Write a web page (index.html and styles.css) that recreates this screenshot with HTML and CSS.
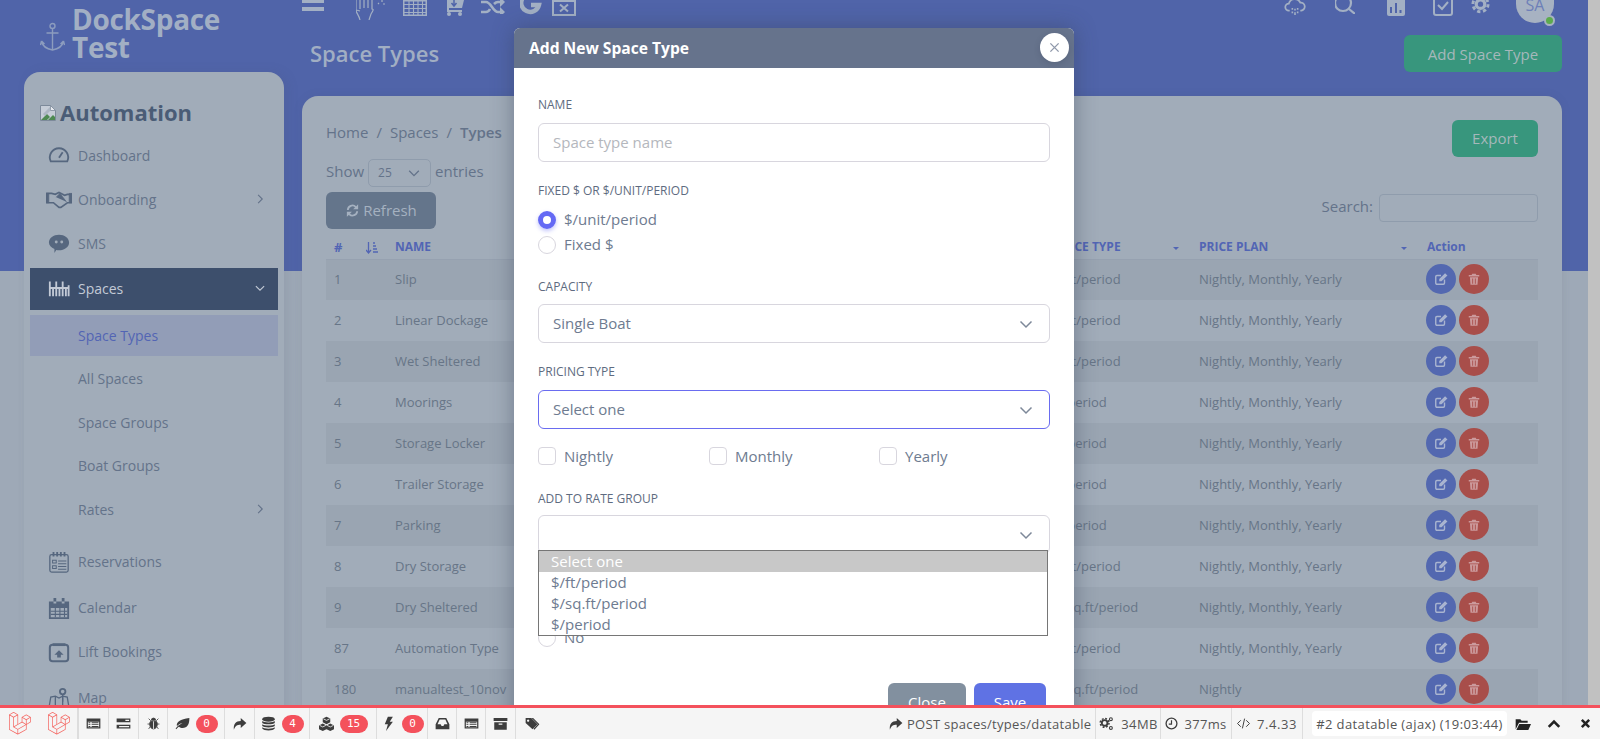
FILE: index.html
```html
<!DOCTYPE html>
<html lang="en">
<head>
<meta charset="utf-8">
<title>Space Types</title>
<link rel="stylesheet" href="styles.css">
</head>
<body>
<svg class="defs" width="0" height="0" aria-hidden="true">
<defs>
<symbol id="i-edit" viewBox="0 0 24 24"><path d="M18 13v6a2 2 0 0 1-2 2H5a2 2 0 0 1-2-2V8a2 2 0 0 1 2-2h7" fill="none" stroke="currentColor" stroke-width="2.4"/><path d="M9 12L19 2l4 4-10 10H9z" fill="currentColor"/></symbol>
<symbol id="i-trash" viewBox="0 0 24 24"><path d="M9 3h6l1 2h5v2.500H3V5h5zM5 9h14l-1 13H6zM9 11v9h1.500v-9zm4.500 0v9H15v-9z" fill="currentColor" fill-rule="evenodd"/></symbol>
<symbol id="i-chev-d" viewBox="0 0 16 16"><path d="M2.500 5.500L8 11l5.500-5.500" fill="none" stroke="currentColor" stroke-width="1.500"/></symbol>
<symbol id="i-chev-r" viewBox="0 0 16 16"><path d="M5.500 2.500L11 8l-5.500 5.500" fill="none" stroke="currentColor" stroke-width="1.500"/></symbol>
<symbol id="i-laravel" viewBox="0 0 50 52"><path d="M49.626 11.564a.809.809 0 0 1 .028.209v10.972a.8.8 0 0 1-.402.694l-9.209 5.302V39.25c0 .286-.152.55-.4.694L20.42 51.01c-.044.025-.092.041-.14.058-.018.006-.035.017-.054.022a.805.805 0 0 1-.41 0c-.022-.006-.042-.018-.063-.026-.044-.016-.09-.03-.132-.054L.402 39.944A.801.801 0 0 1 0 39.25V6.334c0-.072.01-.142.028-.21.006-.023.02-.044.028-.067.015-.042.029-.085.051-.124.015-.026.037-.047.055-.071.023-.032.044-.065.071-.093.023-.023.053-.04.079-.06.029-.024.055-.05.088-.069h.001l9.61-5.533a.802.802 0 0 1 .8 0l9.61 5.533h.002c.032.02.059.045.088.068.026.02.055.038.078.06.028.029.048.062.072.094.017.024.04.045.054.071.023.04.036.082.052.124.008.023.022.044.028.068a.809.809 0 0 1 .028.209v20.559l8.008-4.611v-10.51c0-.07.01-.141.028-.208.007-.024.02-.045.028-.068.016-.042.03-.085.052-.124.015-.026.037-.047.054-.071.024-.032.044-.065.072-.093.023-.023.052-.04.078-.06.03-.024.056-.05.088-.069h.001l9.611-5.533a.801.801 0 0 1 .8 0l9.61 5.533c.034.02.06.045.09.068.025.02.054.038.077.06.028.029.048.062.072.094.018.024.04.045.054.071.023.039.036.082.052.124.009.023.022.044.028.068zm-1.574 10.718v-9.124l-3.363 1.936-4.646 2.675v9.124l8.01-4.611zm-9.61 16.505v-9.13l-4.57 2.61-13.05 7.448v9.216l17.62-10.144zM1.602 7.719v31.068L19.22 48.93v-9.214l-9.204-5.209-.003-.002-.004-.002c-.031-.018-.057-.044-.086-.066-.025-.02-.054-.036-.076-.058l-.002-.003c-.026-.025-.044-.056-.066-.084-.02-.027-.044-.05-.06-.078l-.001-.003c-.018-.03-.029-.066-.042-.1-.013-.03-.03-.058-.038-.09v-.001c-.01-.038-.012-.078-.016-.117-.004-.03-.012-.06-.012-.09v-.002-21.481L4.965 9.654 1.602 7.72zm8.81-5.994L2.405 6.334l8.005 4.609 8.006-4.61-8.006-4.608zm4.164 28.764l4.645-2.674V7.719l-3.363 1.936-4.646 2.675v20.096l3.364-1.937zM39.243 7.164l-8.006 4.609 8.006 4.609 8.005-4.61-8.005-4.608zm-.801 10.605l-4.646-2.675-3.363-1.936v9.124l4.645 2.674 3.364 1.937v-9.124zM20.02 38.33l11.743-6.704 5.87-3.35-8-4.606-9.211 5.303-8.395 4.833 7.993 4.524z" fill="currentColor"/></symbol>
<symbol id="i-list" viewBox="0 0 24 24"><path d="M1 4h22v16H1zm2 5v9h18V9zm1 1h3v1.500H4zm0 3h3v1.500H4zm0 3h3v1.500H4zm5-6h11v1.500H9zm0 3h11v1.500H9zm0 3h11v1.500H9z" fill="currentColor" fill-rule="evenodd"/></symbol>
<symbol id="i-stack" viewBox="0 0 24 24"><path d="M1 4h22v6H1zm14 2v2h6V6zM1 14h22v6H1zm4 2v2h16v-2z" fill="currentColor" fill-rule="evenodd"/></symbol>
<symbol id="i-bug" viewBox="0 0 24 24"><path d="M8 6a4 4 0 0 1 8 0zM7 8h10c1 0 2 2 2 6s-3 8-7 8-7-4-7-8 1-6 2-6zM3 3l4 4M21 3l-4 4M1 13h5M18 13h5M3 22l3-4M21 22l-3-4" fill="currentColor" stroke="currentColor" stroke-width="1.500"/><path d="M12 8v14" stroke="#f5f5f5" stroke-width="1.500"/></symbol>
<symbol id="i-leaf" viewBox="0 0 24 24"><path d="M23 3c0 10-3 16-11 16-2 0-4-.5-6-2-1.500 1.500-3 3-4 4l-1-1c2-3 5-6 11-9-4 1-7 3-9 5C2 9 8 5 23 3z" fill="currentColor"/></symbol>
<symbol id="i-share" viewBox="0 0 24 24"><path d="M14 3l9 8-9 8v-5c-6 0-9 2-11 8-1-9 3-14 11-14z" fill="currentColor"/></symbol>
<symbol id="i-db" viewBox="0 0 24 24"><ellipse cx="12" cy="5" rx="10" ry="4" fill="currentColor"/><path d="M2 8c2 3 18 3 20 0v3c-2 3-18 3-20 0zm0 5c2 3 18 3 20 0v3c-2 3-18 3-20 0zm0 5c2 3 18 3 20 0v2c-2 4-18 4-20 0z" fill="currentColor"/></symbol>
<symbol id="i-cubes" viewBox="0 0 24 24"><path d="M12 1l6 3v6l-6 3-6-3V4zM6 12l6 3v6l-6 3-6-3v-6zM18 12l6 3v6l-6 3-6-3v-6z" fill="currentColor"/><path d="M7 4.500l5 2.500 5-2.500M1 15l5 2.500 5-2.500M13 15l5 2.500 5-2.500" stroke="#f5f5f5" stroke-width="1.300" fill="none"/></symbol>
<symbol id="i-bolt" viewBox="0 0 24 24"><path d="M11 1h8l-5 8h5L8 24l3-11H6z" fill="currentColor"/></symbol>
<symbol id="i-inbox" viewBox="0 0 24 24"><path d="M6 3h12l5 10v8H1v-8zm1.500 2.500L4 13h5l1.500 3h3l1.500-3h5l-3.500-7.500z" fill="currentColor" fill-rule="evenodd"/></symbol>
<symbol id="i-archive" viewBox="0 0 24 24"><path d="M1 3h22v5H1zM2 10h20v12H2zm7 2v2h6v-2z" fill="currentColor" fill-rule="evenodd"/></symbol>
<symbol id="i-tags" viewBox="0 0 24 24"><path d="M1 3h9l10 10-8 8L1 11zm4 2.500a1.800 1.800 0 1 0 .01 0z" fill="currentColor" fill-rule="evenodd"/><path d="M13 3l10 10-8 9-1.500-1.500 7-7.500L10.500 3z" fill="currentColor"/></symbol>
<symbol id="i-cogs" viewBox="0 0 24 24"><circle cx="9" cy="11" r="4.500" fill="none" stroke="currentColor" stroke-width="3"/><circle cx="9" cy="11" r="7" fill="none" stroke="currentColor" stroke-width="2.400" stroke-dasharray="3 2.500"/><circle cx="19" cy="5" r="2.300" fill="none" stroke="currentColor" stroke-width="1.800"/><circle cx="19" cy="19" r="2.300" fill="none" stroke="currentColor" stroke-width="1.800"/></symbol>
<symbol id="i-clock" viewBox="0 0 24 24"><circle cx="12" cy="12" r="10" fill="none" stroke="currentColor" stroke-width="2.400"/><path d="M12 6v7H7" fill="none" stroke="currentColor" stroke-width="2.200"/></symbol>
<symbol id="i-code" viewBox="0 0 24 24"><path d="M7 6l-6 6 6 6M17 6l6 6-6 6M14 3l-4 18" fill="none" stroke="currentColor" stroke-width="1.800"/></symbol>
<symbol id="i-folder" viewBox="0 0 24 24"><path d="M1 20V5h7l2 2h9v3H6zM6.500 12H24l-4 9H2z" fill="currentColor"/></symbol>
<symbol id="i-up" viewBox="0 0 24 24"><path d="M3 17l9-9 9 9" fill="none" stroke="currentColor" stroke-width="4.500"/></symbol>
<symbol id="i-x" viewBox="0 0 24 24"><path d="M4 4l16 16M20 4L4 20" fill="none" stroke="currentColor" stroke-width="5.500"/></symbol>
</defs>
</svg>

<div class="page">
  <aside class="side">
    <div class="brand">
      <svg class="anchor" viewBox="0 0 24 30"><circle cx="12" cy="4" r="2.500" fill="none" stroke="currentColor" stroke-width="1.400"/><path d="M12 6.500V28M6 11h12M1 19c1 5 5 8 11 9 6-1 10-4 11-9M1 19l-1 4M1 19l3 3M23 19l1 4M23 19l-3 3" fill="none" stroke="currentColor" stroke-width="1.400"/></svg>
      <div class="brand-name">DockSpace Test</div>
    </div>
    <nav class="nav-card">
      <div class="org">
        <svg class="broken" viewBox="0 0 16 16"><path d="M.5.500h10l5 5v10H.5z" fill="#c6cdd7" stroke="#7d8a9a"/><path d="M10.500.500v5h5z" fill="#e6e9ee" stroke="#7d8a9a" stroke-width=".8"/><path d="M1 15l6-6 3 3-3 3z" fill="#4e8a52"/><path d="M8 15l5-5 2 2v3z" fill="#4e8a52"/><path d="M3 9l7-7 1 3-6 6z" fill="#a1acb9" opacity=".7"/></svg>
        <span>Automation</span>
      </div>
      <a class="item">
        <svg class="ic" viewBox="0 0 24 24"><path d="M3 19a10 10 0 1 1 18 0z" fill="none" stroke="currentColor" stroke-width="2"/><path d="M12 15l4-6" stroke="currentColor" stroke-width="2"/></svg>
        <span class="lbl">Dashboard</span>
      </a>
      <a class="item">
        <svg class="ic" viewBox="0 0 28 20"><path d="M1 4h5l4 1 4-2 6 3 3-1h4v9h-4l-7 5-2 0-6-5H4l-3 0z" fill="none" stroke="currentColor" stroke-width="1.800"/><path d="M11 8l4-4 7 9M0 4h3v10H0zM25 4h3v10h-3z" fill="currentColor" stroke="currentColor" stroke-width=".8"/></svg>
        <span class="lbl">Onboarding</span>
        <svg class="chev"><use href="#i-chev-r"/></svg>
      </a>
      <a class="item">
        <svg class="ic" viewBox="0 0 24 24"><path d="M12 3c6 0 11 3.500 11 8.500S18 20 12 20c-1 0-2 0-3-.3L7 23v-4.500C3.500 17 1 14.500 1 11.500 1 6.500 6 3 12 3z" fill="currentColor"/><circle cx="9" cy="11" r="1.600" fill="#a1acb9"/><circle cx="15" cy="11" r="1.600" fill="#a1acb9"/></svg>
        <span class="lbl">SMS</span>
      </a>
      <a class="item active">
        <svg class="ic" viewBox="0 0 24 24"><path d="M2 5v16M5.500 12v9M9 5v16M12.500 12v9M16 5v16M19.500 12v9M22.500 9v12M1 12h22" fill="none" stroke="currentColor" stroke-width="2"/></svg>
        <span class="lbl">Spaces</span>
        <svg class="chev down"><use href="#i-chev-d"/></svg>
      </a>
      <a class="item sub current"><span class="lbl">Space Types</span></a>
      <a class="item sub"><span class="lbl">All Spaces</span></a>
      <a class="item sub"><span class="lbl">Space Groups</span></a>
      <a class="item sub"><span class="lbl">Boat Groups</span></a>
      <a class="item sub"><span class="lbl">Rates</span><svg class="chev"><use href="#i-chev-r"/></svg></a>
      <a class="item gap">
        <svg class="ic" viewBox="0 0 24 24"><rect x="2" y="4" width="20" height="19" rx="2" fill="none" stroke="currentColor" stroke-width="1.400"/><path d="M6 1v5M10 1v5M14 1v5M18 1v5" stroke="currentColor" stroke-width="2"/><path d="M5 10h4v3H5zM5 16h4v3H5zM11 11h9M11 14h9M11 17h9M11 20h9" fill="none" stroke="currentColor" stroke-width="1.100"/></svg>
        <span class="lbl">Reservations</span>
      </a>
      <a class="item">
        <svg class="ic" viewBox="0 0 24 24"><path d="M1 5h22v19H1zm2 7v10h18V12zM6 1h3v6H6zM15 1h3v6h-3z" fill="currentColor" fill-rule="evenodd"/><path d="M8 12v10M13 12v10M18 12v10M3 15.500h18M3 19h18" stroke="currentColor" stroke-width="1.200"/></svg>
        <span class="lbl">Calendar</span>
      </a>
      <a class="item">
        <svg class="ic" viewBox="0 0 24 24"><rect x="2" y="4" width="20" height="18" rx="3" fill="none" stroke="currentColor" stroke-width="2.200"/><path d="M5 4h14" stroke="currentColor" stroke-width="3"/><path d="M12 10l5 5h-3v3h-4v-3H7z" fill="currentColor"/></svg>
        <span class="lbl">Lift Bookings</span>
      </a>
      <a class="item last">
        <svg class="ic" viewBox="0 0 24 24"><path d="M1 23l2-12 5-1 4 2 4-2 5 1 2 12H1zM8 10v13M16 10v13" fill="none" stroke="currentColor" stroke-width="1.400"/><circle cx="16" cy="5" r="3" fill="none" stroke="currentColor" stroke-width="2"/><path d="M16 8v8" stroke="currentColor" stroke-width="1.400"/></svg>
        <span class="lbl">Map</span>
      </a>
    </nav>
  </aside>

  <main class="main">
    <div class="topbar">
      <svg class="t-bars" viewBox="0 0 22 11"><path d="M0 0h22v3H0zM0 7h22v4H0z" fill="currentColor"/></svg>
      <svg class="t-hand" viewBox="0 0 30 20"><path d="M4 20c-1-5-4-7-4-10V0M4 0v9M8 0v8M12 0v8M16 0v9c2 0 1 2-1 5l-2 6M0 10l4 1" fill="none" stroke="currentColor" stroke-width="1.200"/><path d="M22 3l1 1M26 0v2M29 4h-2" stroke="currentColor" stroke-width="1.200"/></svg>
      <svg class="t-grid" viewBox="0 0 24 16"><path d="M0 0h24v16H0zM1.500 1.500v13h21v-13z" fill="currentColor" fill-rule="evenodd"/><path d="M6 0v16M10.500 0v16M15 0v16M19.500 0v16M0 4.500h24M0 8.500h24M0 12.500h24" stroke="currentColor" stroke-width="1.100"/></svg>
      <svg class="t-cart" viewBox="0 0 20 16"><path d="M0 0h20l-2 8H5v2h13v2H3V0z" fill="currentColor"/><circle cx="5" cy="14" r="2" fill="currentColor"/><circle cx="16" cy="14" r="2" fill="currentColor"/><path d="M10 0v5M7.500 3l2.500 3 2.500-3" stroke="#5064a9" stroke-width="1.500" fill="none"/></svg>
      <svg class="t-shuffle" viewBox="0 0 24 14"><path d="M0 2h5c5 0 7 10 12 10h3M0 12h5c2 0 3-1 4-3M13 4c1-1 2-2 4-2h3" fill="none" stroke="currentColor" stroke-width="2.600"/><path d="M19 0v-3l5 5-5 5zM19 7l5 5-5 5z" fill="currentColor"/></svg>
      <svg class="t-g" viewBox="0 0 22 16"><path d="M17 -3A9 9 0 1 0 19 5H11" fill="none" stroke="currentColor" stroke-width="4.400"/></svg>
      <svg class="t-xbox" viewBox="0 0 24 16"><path d="M0 0h24v16H0zM2 2v12h20V2z" fill="currentColor" fill-rule="evenodd"/><path d="M8 4.500l8 7M16 4.500l-8 7" stroke="currentColor" stroke-width="2"/></svg>
      <div class="top-right">
        <svg class="r-cloud" viewBox="0 0 24 17"><path d="M6 12H5a4 4 0 0 1 0-8 7 7 0 0 1 13-1 4.500 4.500 0 0 1 1 9h-1" fill="none" stroke="currentColor" stroke-width="2"/><path d="M9 9v2M12 10v2M15 9v2M9 13v2M12 14v3M15 13v2" stroke="currentColor" stroke-width="1.800"/></svg>
        <svg class="r-search" viewBox="0 0 20 14"><circle cx="8" cy="3" r="8" fill="none" stroke="currentColor" stroke-width="2.200"/><path d="M14 9l6 5" stroke="currentColor" stroke-width="2.200"/></svg>
        <svg class="r-chart" viewBox="0 0 18 16"><path d="M0-2h18v16a2 2 0 0 1-2 2H2a2 2 0 0 1-2-2z" fill="currentColor"/><path d="M4 7v6M9 3v10M13.500 10v3" stroke="#5064a9" stroke-width="2"/></svg>
        <svg class="r-check" viewBox="0 0 20 16"><rect x="1" y="-4" width="18" height="19" rx="2" fill="none" stroke="currentColor" stroke-width="2"/><path d="M5 5l4 4 6-7" fill="none" stroke="currentColor" stroke-width="2"/></svg>
        <svg class="r-gear" viewBox="0 0 20 14"><circle cx="10" cy="4" r="4.500" fill="none" stroke="currentColor" stroke-width="3.400"/><circle cx="10" cy="4" r="8" fill="none" stroke="currentColor" stroke-width="3" stroke-dasharray="3.500 2.800"/></svg>
        <div class="avatar"><span>SA</span><i class="online"></i></div>
      </div>
    </div>
    <div class="title-row">
      <h1>Space Types</h1>
      <button class="btn-green add">Add Space Type</button>
    </div>
    <section class="card">
      <div class="crumb-row">
        <div class="crumbs"><span>Home</span><b class="slash">/</b><span>Spaces</span><b class="slash">/</b><strong>Types</strong></div>
        <button class="btn-green export">Export</button>
      </div>
      <div class="length">Show <span class="len-sel">25<svg class="len-chev"><use href="#i-chev-d"/></svg></span> entries</div>
      <div class="tools">
        <button class="refresh"><svg class="ref-ic" viewBox="0 0 24 24"><path d="M3 11a9 9 0 0 1 15-6l3-3v8h-8l3-3a6 6 0 0 0-10 4zM21 13a9 9 0 0 1-15 6l-3 3v-8h8l-3 3a6 6 0 0 0 10-4z" fill="currentColor"/></svg>Refresh</button>
        <label class="search">Search: <span class="search-box"></span></label>
      </div>
      <table class="grid">
        <colgroup><col class="c-id"><col class="c-name"><col class="c-type"><col class="c-plan"><col class="c-act"></colgroup>
        <thead>
          <tr>
            <th><span class="hash">#</span><svg class="sort-ic" viewBox="0 0 12 12"><path d="M2.500 0v10M0 8l2.500 3L5 8M7 1h2M7 4h3M7 7h4M7 10h5" fill="none" stroke="currentColor" stroke-width="1.300"/></svg></th>
            <th>NAME</th>
            <th class="th-sort">PRICE TYPE<i class="caret"></i></th>
            <th class="th-sort">PRICE PLAN<i class="caret"></i></th>
            <th>Action</th>
          </tr>
        </thead>
        <tbody>
          <tr><td>1</td><td>Slip</td><td>$/ft/period</td><td>Nightly, Monthly, Yearly</td><td class="act"><a class="round edit"><svg><use href="#i-edit"/></svg></a><a class="round del"><svg><use href="#i-trash"/></svg></a></td></tr>
          <tr><td>2</td><td>Linear Dockage</td><td>$/ft/period</td><td>Nightly, Monthly, Yearly</td><td class="act"><a class="round edit"><svg><use href="#i-edit"/></svg></a><a class="round del"><svg><use href="#i-trash"/></svg></a></td></tr>
          <tr><td>3</td><td>Wet Sheltered</td><td>$/ft/period</td><td>Nightly, Monthly, Yearly</td><td class="act"><a class="round edit"><svg><use href="#i-edit"/></svg></a><a class="round del"><svg><use href="#i-trash"/></svg></a></td></tr>
          <tr><td>4</td><td>Moorings</td><td>$/period</td><td>Nightly, Monthly, Yearly</td><td class="act"><a class="round edit"><svg><use href="#i-edit"/></svg></a><a class="round del"><svg><use href="#i-trash"/></svg></a></td></tr>
          <tr><td>5</td><td>Storage Locker</td><td>$/period</td><td>Nightly, Monthly, Yearly</td><td class="act"><a class="round edit"><svg><use href="#i-edit"/></svg></a><a class="round del"><svg><use href="#i-trash"/></svg></a></td></tr>
          <tr><td>6</td><td>Trailer Storage</td><td>$/period</td><td>Nightly, Monthly, Yearly</td><td class="act"><a class="round edit"><svg><use href="#i-edit"/></svg></a><a class="round del"><svg><use href="#i-trash"/></svg></a></td></tr>
          <tr><td>7</td><td>Parking</td><td>$/period</td><td>Nightly, Monthly, Yearly</td><td class="act"><a class="round edit"><svg><use href="#i-edit"/></svg></a><a class="round del"><svg><use href="#i-trash"/></svg></a></td></tr>
          <tr><td>8</td><td>Dry Storage</td><td>$/ft/period</td><td>Nightly, Monthly, Yearly</td><td class="act"><a class="round edit"><svg><use href="#i-edit"/></svg></a><a class="round del"><svg><use href="#i-trash"/></svg></a></td></tr>
          <tr><td>9</td><td>Dry Sheltered</td><td>$/sq.ft/period</td><td>Nightly, Monthly, Yearly</td><td class="act"><a class="round edit"><svg><use href="#i-edit"/></svg></a><a class="round del"><svg><use href="#i-trash"/></svg></a></td></tr>
          <tr><td>87</td><td>Automation Type</td><td>$/ft/period</td><td>Nightly, Monthly, Yearly</td><td class="act"><a class="round edit"><svg><use href="#i-edit"/></svg></a><a class="round del"><svg><use href="#i-trash"/></svg></a></td></tr>
          <tr><td>180</td><td>manualtest_10nov</td><td>$/sq.ft/period</td><td>Nightly</td><td class="act"><a class="round edit"><svg><use href="#i-edit"/></svg></a><a class="round del"><svg><use href="#i-trash"/></svg></a></td></tr>
        </tbody>
      </table>
    </section>
  </main>

  <div class="modal">
    <header class="modal-head"><span>Add New Space Type</span><button class="close"><svg viewBox="0 0 12 12"><path d="M1.500 1.500l9 9M10.500 1.500l-9 9" stroke="currentColor" stroke-width="1.500"/></svg></button></header>
    <form class="modal-body">
      <label class="f-label l-name">NAME</label>
      <input class="f-input" type="text" placeholder="Space type name">
      <label class="f-label l-fixed">FIXED $ OR $/UNIT/PERIOD</label>
      <div class="opt"><i class="radio on"></i><span>$/unit/period</span></div>
      <div class="opt"><i class="radio"></i><span>Fixed $</span></div>
      <label class="f-label l-cap">CAPACITY</label>
      <div class="f-select"><span>Single Boat</span><svg class="sel-chev"><use href="#i-chev-d"/></svg></div>
      <label class="f-label l-price">PRICING TYPE</label>
      <div class="f-select focus"><span>Select one</span><svg class="sel-chev"><use href="#i-chev-d"/></svg></div>
      <div class="checks">
        <div class="opt"><i class="box"></i><span>Nightly</span></div>
        <div class="opt"><i class="box"></i><span>Monthly</span></div>
        <div class="opt"><i class="box"></i><span>Yearly</span></div>
      </div>
      <label class="f-label l-rate">ADD TO RATE GROUP</label>
      <div class="rate-wrap">
        <div class="f-select"><span></span><svg class="sel-chev"><use href="#i-chev-d"/></svg></div>
        <ul class="dropdown">
          <li class="sel">Select one</li>
          <li>$/ft/period</li>
          <li>$/sq.ft/period</li>
          <li>$/period</li>
        </ul>
      </div>
      <div class="opt yes"><i class="radio"></i><span>Yes</span></div>
      <div class="opt"><i class="radio"></i><span>No</span></div>
      <div class="modal-foot"><button type="button" class="m-close">Close</button><button type="button" class="m-save">Save</button></div>
    </form>
  </div>
</div>
<div class="scrollbar"></div>

<footer class="debugbar">
  <div class="db-cell db-logos"><svg class="lara"><use href="#i-laravel"/></svg><svg class="lara"><use href="#i-laravel"/></svg></div>
  <div class="db-cell w30"><svg class="db-ic"><use href="#i-list"/></svg></div>
  <div class="db-cell w30"><svg class="db-ic"><use href="#i-stack"/></svg></div>
  <div class="db-cell w29"><svg class="db-ic small"><use href="#i-bug"/></svg></div>
  <div class="db-cell w57"><svg class="db-ic"><use href="#i-leaf"/></svg><b class="badge">0</b></div>
  <div class="db-cell w30"><svg class="db-ic"><use href="#i-share"/></svg></div>
  <div class="db-cell w55"><svg class="db-ic"><use href="#i-db"/></svg><b class="badge">4</b></div>
  <div class="db-cell w67"><svg class="db-ic"><use href="#i-cubes"/></svg><b class="badge wide">15</b></div>
  <div class="db-cell w51"><svg class="db-ic"><use href="#i-bolt"/></svg><b class="badge">0</b></div>
  <div class="db-cell w29"><svg class="db-ic"><use href="#i-inbox"/></svg></div>
  <div class="db-cell w29"><svg class="db-ic"><use href="#i-list"/></svg></div>
  <div class="db-cell w30"><svg class="db-ic"><use href="#i-archive"/></svg></div>
  <div class="db-cell w32 noline"><svg class="db-ic"><use href="#i-tags"/></svg></div>
  <div class="db-right">
    <div class="db-cell db-post"><svg class="db-ic"><use href="#i-share"/></svg><span>POST spaces/types/datatable</span></div>
    <div class="db-cell db-mem"><svg class="db-ic"><use href="#i-cogs"/></svg><span>34MB</span></div>
    <div class="db-cell db-time"><svg class="db-ic small"><use href="#i-clock"/></svg><span>377ms</span></div>
    <div class="db-cell db-php"><svg class="db-ic small"><use href="#i-code"/></svg><span>7.4.33</span></div>
    <div class="db-req">#2 datatable (ajax) (19:03:44)</div>
    <svg class="db-act folder"><use href="#i-folder"/></svg>
    <svg class="db-act up"><use href="#i-up"/></svg>
    <svg class="db-act xx"><use href="#i-x"/></svg>
  </div>
</footer>
</body>
</html>
```
FILE: styles.css
```css
* { box-sizing: border-box; }
html, body { margin: 0; height: 739px; overflow: hidden; }
body {
  display: flex;
  font-family: "Open Sans", "Noto Sans", sans-serif;
  font-size: 14px;
  color: #64738a;
  background: #c1c1c1;
}
.defs { position: absolute; }
button { font-family: inherit; border: 0; }

.page {
  position: relative;
  width: 1588px;
  height: 739px;
  overflow: hidden;
  display: grid;
  grid-template-columns: 302px 1fr;
  align-items: start;
  background: linear-gradient(#5064a9 0, #5064a9 271px, #9ea9b7 271px);
}
.scrollbar { width: 12px; background: #c1c1c1; }

/* sidebar */
.side { padding-left: 24px; }
.brand { height: 72px; display: flex; align-items: center; padding: 0 0 0 16px; gap: 7px; color: #8c9cbe; }
.anchor { width: 25px; height: 30px; margin-top: 2px; flex: none; }
.brand-name { width: 170px; font-size: 28px; font-weight: 700; line-height: 28px; color: #a2afc4; letter-spacing: -.3px; margin-top: -7px; }
.nav-card {
  width: 260px;
  height: 660px;
  background: #a1acb9;
  border-radius: 16px 16px 0 0;
  padding: 0 6px;
  box-shadow: 4px 0 12px rgba(70, 85, 110, .12);
}
.org { height: 61px; display: flex; align-items: center; gap: 4px; padding: 19px 0 0 10px; color: #4a5c76; font-size: 22px; font-weight: 700; }
.broken { width: 16px; height: 16px; flex: none; margin-top: 2px; }
.item { height: 44px; display: flex; align-items: center; padding-left: 16px; font-size: 14px; color: #64738a; position: relative; }
.ic { width: 26px; height: 22px; flex: none; margin-right: 6px; color: #56677f; }
.lbl { flex: 1; white-space: nowrap; }
.item.sub .lbl { padding-left: 32px; }
.chev { width: 12px; height: 12px; margin-right: 12px; color: #64738a; }
.item.active { height: 42px; margin-top: 3px; padding-bottom: 2px; background: #3d4f6c; color: #c3cad6; }
.item.active .ic, .item.active .chev { color: #c3cad6; }
.item.current { height: 41px; margin-top: 5px; background: #929db7; color: #5265b4; }
.item.sub { margin-bottom: -.5px; }
.item.sub.current { margin-bottom: .5px; }
.item.gap { margin-top: 9px; margin-bottom: 2px; }
.item.last { margin-top: 2px; }

/* main */
.main { padding-right: 26px; min-width: 0; }
.topbar { height: 24px; display: flex; align-items: flex-start; color: #a3b0c4; position: relative; }
.topbar svg { flex: none; }
.t-bars { width: 22px; height: 11px; }
.t-hand { width: 30px; height: 20px; margin-left: 32px; }
.t-grid { width: 24px; height: 16px; margin-left: 17px; }
.t-cart { width: 20px; height: 16px; margin-left: 17px; }
.t-shuffle { width: 24px; height: 14px; margin-left: 17px; }
.t-g { width: 22px; height: 16px; margin-left: 15px; }
.t-xbox { width: 24px; height: 16px; margin-left: 10px; }
.top-right { margin-left: auto; margin-right: 8px; display: flex; align-items: flex-start; }
.r-cloud { width: 22px; height: 15px; }
.r-search { width: 20px; height: 14px; margin-left: 29px; }
.r-chart { width: 18px; height: 16px; margin-left: 32px; }
.r-check { width: 20px; height: 16px; margin-left: 28px; }
.r-gear { width: 19px; height: 14px; margin-left: 18px; }
.avatar { width: 38px; height: 23px; margin-left: 26px; background: #a7b2c2; border-radius: 0 0 19px 19px; position: relative; text-align: center; line-height: 10px; color: #6d7fb8; font-size: 16px; }
.online { position: absolute; right: -1px; bottom: -3px; width: 11px; height: 11px; border-radius: 50%; background: #5cab4d; border: 2px solid #a7b2c2; }
.title-row { height: 72px; display: flex; justify-content: space-between; align-items: flex-start; padding-left: 8px; }
h1 { margin: 14px 0 0; font-size: 22px; line-height: 30px; font-weight: 600; color: #a1aec3; }
.btn-green { height: 37px; background: #38967d; color: #a5b8bb; border-radius: 6px; font-size: 15px; }
.add { width: 158px; margin-top: 11px; }
.export { width: 86px; padding-bottom: 2px; }

.card {
  background: #a1acb9;
  border-radius: 16px 16px 0 0;
  height: 660px;
  padding: 24px 24px 0;
  box-shadow: 0 0 10px rgba(70, 85, 110, .12);
}
.crumb-row { display: flex; justify-content: space-between; height: 39px; }
.crumbs { font-size: 15px; line-height: 24px; color: #64738a; }
.crumbs strong { font-weight: 600; }
.slash { font-weight: 400; margin: 0 8px; }
.length { height: 28px; display: flex; align-items: flex-start; gap: 4px; font-size: 15px; line-height: 24px; margin-bottom: 5px; }
.len-sel { width: 63px; height: 28px; border: 1px solid #8f9cac; border-radius: 5px; display: flex; align-items: center; justify-content: space-between; padding: 0 9px; font-size: 12px; margin: 0; }
.len-chev { width: 14px; height: 14px; }
.tools { display: flex; justify-content: space-between; height: 37px; }
.refresh { width: 110px; height: 37px; background: #64758b; color: #a5b1c0; border-radius: 6px; font-size: 15px; display: flex; align-items: center; justify-content: center; gap: 3px; padding: 0 0 2px; }
.ref-ic { width: 15px; height: 15px; margin-top: 2px; }
.search { display: flex; align-items: flex-start; gap: 6px; font-size: 15px; line-height: 24px; height: 28px; margin-top: 2px; }
.search-box { width: 159px; height: 28px; border: 1px solid #8f9cac; border-radius: 4px; }

.grid { width: 100%; table-layout: fixed; border-collapse: collapse; font-size: 13px; }
col.c-id { width: 61px; }
col.c-name { width: 660px; }
col.c-type { width: 144px; }
col.c-plan { width: 228px; }
col.c-act { width: 119px; }
.grid th { height: 30px; text-align: left; padding: 6px 0 0 8px; font-size: 12px; font-weight: 700; color: #5265b4; position: relative; border-bottom: 1px solid #96a1b0; white-space: nowrap; }
.grid th:first-child { font-size: 13px; }
.hash { display: inline-block; width: 32px; }
.sort-ic { width: 12px; height: 12px; vertical-align: -2px; }
.caret { position: absolute; right: 12px; top: 18px; border: 3px solid transparent; border-top-color: #5265b4; }
.grid td { height: 41px; padding: 0 0 1px 8px; color: #677587; white-space: nowrap; }
.grid tbody tr:nth-child(odd) { background: #9aa5b2; }
.grid td.act { padding-left: 7px; }
.round { display: inline-flex; align-items: center; justify-content: center; width: 30px; height: 30px; border-radius: 50%; margin-right: 3px; vertical-align: middle; }
.round svg { width: 14px; height: 14px; }
.edit { background: #5368b0; color: #a9b4d0; }
.del { background: #a84e4a; color: #cc9a9c; }

/* modal overlay */
.modal {
  position: absolute;
  left: 514px;
  top: 28px;
  width: 560px;
  height: 740px;
  background: #fff;
  border-radius: 6px 6px 0 0;
  box-shadow: 0 0 22px rgba(50, 62, 85, .45);
}
.modal-head { position: relative; height: 40px; background: #66738c; border-radius: 6px 6px 0 0; display: flex; align-items: center; padding-left: 15px; color: #fff; font-size: 15.600px; font-weight: 700; }
.close { position: absolute; right: 5px; top: 5px; width: 29px; height: 29px; border-radius: 50%; background: #fff; color: #9099ab; display: flex; align-items: center; justify-content: center; padding: 0; box-shadow: 0 2px 6px rgba(40, 50, 70, .2); }
.close svg { width: 11px; height: 11px; }
.modal-body { padding: 0 24px; display: block; }
.f-label { display: block; font-size: 12px; line-height: 16px; color: #5e6b80; }
.l-name { margin-top: 29px; margin-bottom: 10px; }
.l-fixed { margin-top: 21px; margin-bottom: 8px; }
.l-cap { margin-top: 22px; margin-bottom: 9px; }
.l-price { margin-top: 21px; margin-bottom: 10px; }
.l-rate { margin-top: 23px; margin-bottom: 8px; }
.f-input, .f-select {
  display: flex;
  align-items: center;
  justify-content: space-between;
  width: 512px;
  height: 39px;
  border: 1px solid #d8d6de;
  border-radius: 6px;
  padding: 0 14px 2px;
  font-family: inherit;
  font-size: 15px;
  color: #6e7b90;
  background: #fff;
}
.f-input::placeholder { color: #b4b7bd; opacity: 1; }
.f-select.focus { border-color: #6a6cf0; }
.sel-chev { width: 16px; height: 16px; color: #7d8899; margin-right: 1px; margin-top: 2px; }
.opt { display: flex; align-items: center; height: 25px; gap: 8px; font-size: 15px; color: #6e7b90; }
.radio + span { margin-top: -2px; }
.radio, .box { display: block; width: 18px; height: 18px; flex: none; border: 1px solid #d8d6de; }
.radio { border-radius: 50%; }
.radio.on { border: 5px solid #6469f4; box-shadow: 0 2px 4px rgba(100, 105, 244, .4); }
.box { border-radius: 4px; }
.checks { display: grid; grid-template-columns: 171px 170px 1fr; margin-top: 14px; }
.rate-wrap { position: relative; }
.dropdown {
  position: absolute;
  left: 0;
  top: 35px;
  width: 510px;
  margin: 0;
  padding: 0;
  list-style: none;
  border: 1px solid #767676;
  background: #fff;
  font-size: 15px;
  line-height: 21px;
  color: #6e7b90;
}
.dropdown li { height: 21px; padding-left: 12px; }
.dropdown li.sel { background: #c8c8c8; color: #fff; }
.opt.yes { margin-top: 46px; }
.modal-foot { display: flex; justify-content: flex-end; gap: 8px; margin: 33px 4px 0 0; }
.m-close, .m-save { height: 38px; border-radius: 6px; color: #fff; font-size: 15px; padding: 0; }
.m-close { width: 78px; background: #82909f; }
.m-save { width: 72px; background: #5f72e4; }

/* debug bar */
.debugbar {
  position: fixed;
  left: 0;
  right: 0;
  bottom: 0;
  height: 34px;
  display: flex;
  background: #f5f5f5;
  border-top: 3px solid #f4515c;
  font-family: "Open Sans", "Noto Sans", sans-serif;
  font-size: 13px;
  letter-spacing: .3px;
  color: #555;
}
.db-cell { display: flex; align-items: center; justify-content: center; height: 100%; border-right: 1px solid #ddd; gap: 6px; flex: none; }
.db-logos { width: 79px; border-right: 2px solid #ddd; justify-content: flex-start; gap: 17px; padding-left: 9px; }
.lara { width: 22px; height: 23px; color: #f4645f; flex: none; }
.w29 { width: 29px; } .w30 { width: 30px; } .w32 { width: 32px; } .w51 { width: 51px; }
.w55 { width: 55px; } .w57 { width: 57px; } .w67 { width: 67px; }
.noline { border-right: 0; }
.db-ic { width: 15px; height: 15px; color: #3d3d3d; flex: none; }
.db-ic.small { width: 13px; height: 13px; }
.badge { background: #f4515c; color: #fff; border-radius: 10px; width: 22px; height: 18px; line-height: 18px; text-align: center; font-family: "DejaVu Sans Mono", monospace; font-weight: 400; font-size: 11px; letter-spacing: 0; }
.badge.wide { width: 28px; }
.db-right { margin-left: auto; display: flex; align-items: center; height: 100%; }
.db-post { width: 210px; gap: 4px; justify-content: flex-start; padding-left: 2px; }
.db-mem { width: 65px; gap: 7px; padding-left: 1px; }
.db-mem span { letter-spacing: .4px; }
.db-time { width: 71px; }
.db-php { width: 71px; gap: 7px; }
.db-php span { letter-spacing: .6px; }
.db-req { width: 195px; height: 25px; margin-left: 9px; background: #fff; border-radius: 4px; letter-spacing: .4px; display: flex; align-items: center; justify-content: center; white-space: nowrap; color: #555; }
.db-act { color: #222; flex: none; }
.folder { width: 18px; height: 16px; margin-left: 7px; }
.up { width: 14px; height: 14px; margin-left: 15px; }
.xx { width: 11px; height: 11px; margin-left: 19px; margin-right: 9px; }
```
